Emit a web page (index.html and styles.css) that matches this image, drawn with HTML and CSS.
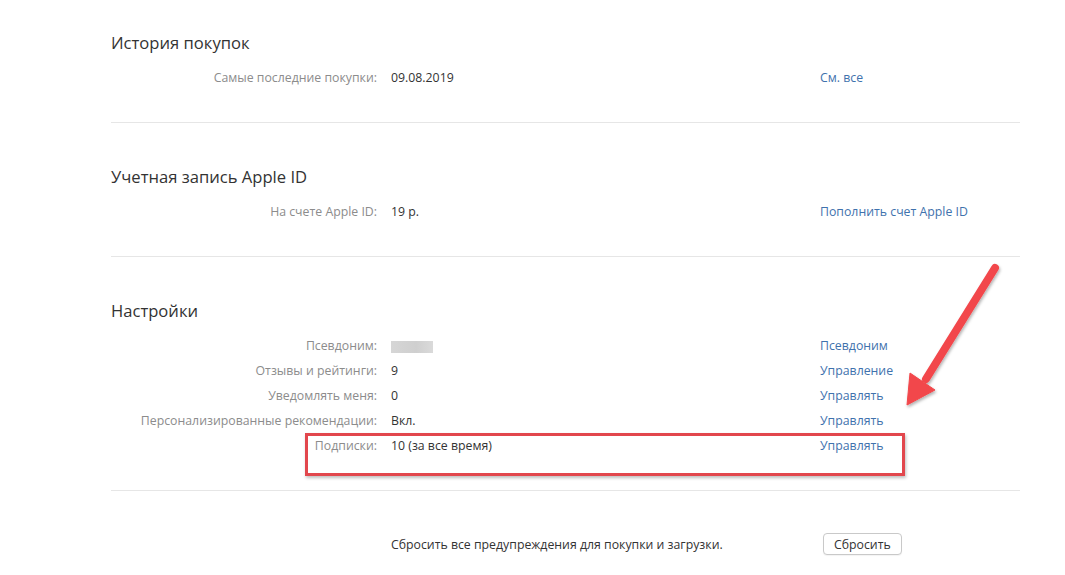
FILE: index.html
```html
<!DOCTYPE html>
<html lang="ru">
<head>
    <meta charset="UTF-8">
    <meta name="viewport" content="width=device-width, initial-scale=1.0">
    <title>Информация об учетной записи</title>
    <link rel="stylesheet" href="styles.css">
</head>
<body>
    <div class="page">
        <section class="section first">
            <h2>История покупок</h2>
            <div class="rows">
                <div class="label">Самые последние покупки:</div>
                <div class="value">09.08.2019</div>
                <a class="link" href="#">См. все</a>
            </div>
        </section>

        <section class="section">
            <h2>Учетная запись Apple ID</h2>
            <div class="rows">
                <div class="label">На счете Apple ID:</div>
                <div class="value">19 р.</div>
                <a class="link" href="#">Пополнить счет Apple ID</a>
            </div>
        </section>

        <section class="section">
            <h2>Настройки</h2>
            <div class="rows">
                <div class="label">Псевдоним:</div>
                <div class="value"><span class="hidden-name"></span></div>
                <a class="link" href="#">Псевдоним</a>

                <div class="label">Отзывы и рейтинги:</div>
                <div class="value">9</div>
                <a class="link" href="#">Управление</a>

                <div class="label">Уведомлять меня:</div>
                <div class="value">0</div>
                <a class="link" href="#">Управлять</a>

                <div class="label">Персонализированные рекомендации:</div>
                <div class="value">Вкл.</div>
                <a class="link" href="#">Управлять</a>

                <div class="label">Подписки:</div>
                <div class="value">10 (за все время)</div>
                <a class="link" href="#">Управлять</a>
            </div>
        </section>

        <section class="section last">
            <div class="rows">
                <div class="label"></div>
                <div class="value">Сбросить все предупреждения для покупки и загрузки.</div>
                <div><button class="btn" type="button">Сбросить</button></div>
            </div>
        </section>
    </div>

    <!-- annotation -->
    <div class="highlight"></div>
    <svg class="arrow" width="120" height="160" viewBox="0 0 120 160">
        <defs>
            <filter id="shadow" x="-20%" y="-20%" width="140%" height="140%">
                <feDropShadow dx="1" dy="2" stdDeviation="1.5" flood-color="#000" flood-opacity="0.3"/>
            </filter>
        </defs>
        <g filter="url(#shadow)" fill="#f2474b" stroke="#f2474b">
            <line x1="95" y1="13" x2="26" y2="124" stroke-width="8" stroke-linecap="round"/>
            <polygon points="10,118 35,135 7,150" stroke-width="1" stroke-linejoin="round"/>
        </g>
    </svg>
</body>
</html>
```

FILE: styles.css
```css
body {
    margin: 0;
    background-color: #fff;
    font-family: "Open Sans", "Noto Sans", sans-serif;
    font-size: 12.3px;
    color: #333;
}
.page {
    width: 909px;
    margin-left: 111px;
}
.section {
    padding: 42px 0 32px;
    border-bottom: 1px solid #e6e6e6;
}
.section.first {
    padding-top: 31px;
}
.section.last {
    border-bottom: none;
    padding-top: 42px;
}
h2 {
    margin: 0 0 10px;
    font-size: 16.6px;
    font-weight: normal;
    line-height: 24px;
    color: #333;
}
.rows {
    display: grid;
    grid-template-columns: 266px 415px 1fr;
    column-gap: 14px;
    grid-auto-rows: 25px;
    align-items: center;
}
.last .rows {
    grid-auto-rows: 22px;
}
.label {
    text-align: right;
    color: #8c8c8c;
    white-space: nowrap;
}
.value {
    color: #333;
    white-space: nowrap;
}
.link {
    color: #3f72ad;
    text-decoration: none;
    white-space: nowrap;
}
.hidden-name {
    display: inline-block;
    width: 42px;
    height: 12px;
    vertical-align: middle;
    background: linear-gradient(90deg, #d6d6d6, #cfcfcf 60%, #dadada);
}
.btn {
    margin-left: 3px;
    height: 22px;
    padding: 0 10px;
    font-family: inherit;
    font-size: 12.3px;
    color: #333;
    background: #fff;
    border: 1px solid #c9c9c9;
    border-radius: 4px;
    box-shadow: 0 1px 1px rgba(0, 0, 0, 0.05);
}
.highlight {
    position: absolute;
    left: 305px;
    top: 433px;
    width: 594px;
    height: 37px;
    border: 3px solid #e2474d;
    box-shadow: 1px 2px 3px rgba(0, 0, 0, 0.25);
}
.arrow {
    position: absolute;
    left: 900px;
    top: 255px;
}
```
